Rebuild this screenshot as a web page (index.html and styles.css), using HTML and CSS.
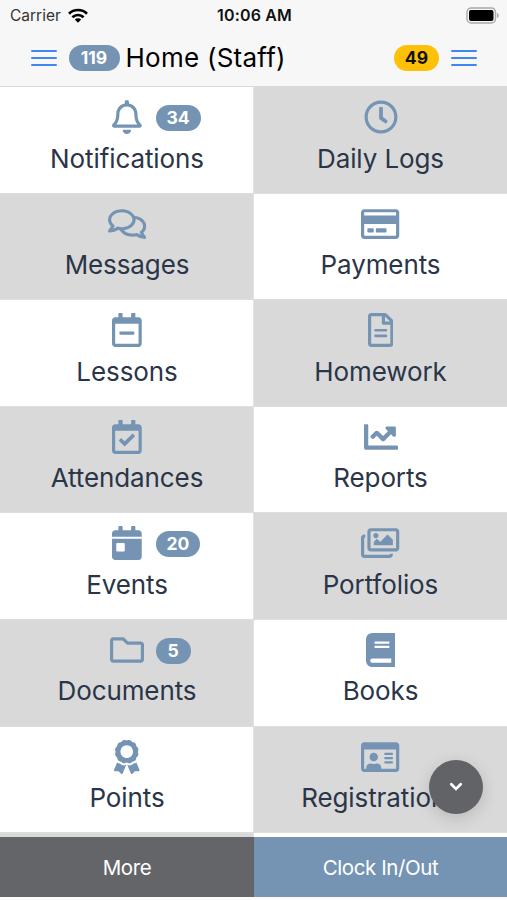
FILE: index.html
```html
<!DOCTYPE html>
<html lang="en">
<head>
    <meta charset="UTF-8">
    <meta name="viewport" content="width=device-width, initial-scale=1.0">
    <title>Home (Staff)</title>
    <link rel="stylesheet" href="styles.css">
</head>
<body>
    <header>
        <div class="status-bar">
            <div class="carrier">
                <span>Carrier</span>
                <svg class="wifi" viewBox="0 0 20 15" width="20" height="15">
                    <g fill="none" stroke="#000" stroke-width="2.7">
                        <path d="M1 5.7a12.8 12.8 0 0 1 18 0"/>
                        <path d="M4.4 9.3a8 8 0 0 1 11.2 0"/>
                    </g>
                    <path d="M10 14.8l-3.2-3.2a4.6 4.6 0 0 1 6.4 0z"/>
                </svg>
            </div>
            <div class="clock">10:06 AM</div>
            <div class="battery-wrap">
                <svg viewBox="0 0 33 17" width="33" height="17">
                    <rect x="1" y="1" width="28.5" height="15" rx="4.2" fill="#f7f7f7" stroke="#a9a9a9" stroke-width="1.4"/>
                    <rect x="3" y="3" width="24.5" height="11" rx="2"/>
                    <path d="M31 6v5c2.3-.8 2.3-4.2 0-5z" fill="#a9a9a9"/>
                </svg>
            </div>
        </div>
        <nav>
            <button class="menu" aria-label="Menu"><i></i><i></i><i></i></button>
            <span class="badge">119</span>
            <h1>Home (Staff)</h1>
            <span class="badge yellow">49</span>
            <button class="menu" aria-label="Options"><i></i><i></i><i></i></button>
        </nav>
    </header>

    <main class="grid">
        <a class="tile">
            <div class="icon">
                <svg viewBox="0 0 448 512"><path d="M439.39 362.29c-19.32-20.76-55.47-51.99-55.47-154.29 0-77.7-54.48-139.9-127.94-155.16V32c0-17.67-14.32-32-31.98-32s-31.98 14.33-31.98 32v20.84C118.56 68.1 64.08 130.3 64.08 208c0 102.3-36.15 133.53-55.47 154.29-6 6.45-8.66 14.16-8.61 21.71.11 16.4 12.98 32 32.1 32h383.8c19.12 0 32-15.6 32.1-32 .05-7.55-2.61-15.27-8.61-21.71zM67.53 368c21.22-27.97 44.42-74.33 44.53-159.42 0-.2-.06-.38-.06-.58 0-61.86 50.14-112 112-112s112 50.14 112 112c0 .2-.06.38-.06.58.11 85.1 23.31 131.46 44.53 159.42H67.53zM224 512c35.32 0 63.97-28.65 63.97-64H160.03c0 35.35 28.65 64 63.97 64z"/></svg>
                <span class="badge">34</span>
            </div>
            <span class="label">Notifications</span>
        </a>
        <a class="tile gray">
            <div class="icon">
                <svg viewBox="0 0 512 512"><path d="M256 8C119 8 8 119 8 256s111 248 248 248 248-111 248-248S393 8 256 8zm0 448c-110.5 0-200-89.5-200-200S145.5 56 256 56s200 89.5 200 200-89.5 200-200 200zm61.8-104.4l-84.9-61.7c-3.1-2.3-4.9-5.9-4.9-9.7V116c0-6.6 5.4-12 12-12h32c6.6 0 12 5.4 12 12v141.7l66.8 48.6c5.4 3.9 6.5 11.4 2.6 16.8L334.6 349c-3.9 5.3-11.4 6.5-16.8 2.6z"/></svg>
            </div>
            <span class="label">Daily Logs</span>
        </a>
        <a class="tile gray">
            <div class="icon">
                <svg viewBox="0 0 576 512"><path d="M532 386.2c27.5-27.1 44-61.1 44-98.2 0-80-76.5-146.1-176.2-157.9C368.3 72.5 294.3 32 208 32 93.1 32 0 103.6 0 192c0 37 16.5 71 44 98.2-15.3 30.7-37.3 54.5-37.7 54.9-6.3 6.7-8.1 16.5-4.4 25 3.6 8.5 12 14 21.2 14 53.5 0 96.7-20.2 125.2-38.8 9.2 2.1 18.7 3.7 28.4 4.9C208.1 407.6 281.8 448 368 448c20.8 0 40.8-2.4 59.8-6.8C456.3 459.7 499.4 480 553 480c9.2 0 17.5-5.5 21.2-14 3.6-8.5 1.9-18.3-4.4-25-.4-.3-22.5-24.1-37.8-54.8zm-392.8-92.3L122.1 305c-14.1 9.1-28.5 16.3-43.1 21.4 2.7-4.7 5.4-9.7 8-14.8l15.5-31.1L77.7 256C64.2 242.6 48 220.7 48 192c0-60.7 73.3-112 160-112s160 51.3 160 112-73.3 112-160 112c-16.5 0-33-1.9-49-5.6l-19.8-4.5zM498.3 352l-24.7 24.4 15.5 31.1c2.6 5.1 5.3 10.1 8 14.8-14.6-5.1-29-12.3-43.1-21.4l-17.1-11.1-19.9 4.6c-16 3.7-32.5 5.6-49 5.6-54 0-102.2-20.1-131.3-49.7C338 339.5 416 272.9 416 192c0-3.4-.4-6.7-.7-10C479.7 196.5 528 238.8 528 288c0 28.7-16.2 50.6-29.7 64z"/></svg>
            </div>
            <span class="label">Messages</span>
        </a>
        <a class="tile">
            <div class="icon">
                <svg viewBox="0 0 576 512"><path d="M527.9 32H48.1C21.5 32 0 53.5 0 80v352c0 26.5 21.5 48 48.1 48h479.8c26.6 0 48.1-21.5 48.1-48V80c0-26.5-21.5-48-48.1-48zM54.1 80h467.8c3.3 0 6 2.7 6 6v42H48.1V86c0-3.3 2.7-6 6-6zm467.8 352H54.1c-3.3 0-6-2.7-6-6V256h479.8v170c0 3.3-2.7 6-6 6zM192 332v40c0 6.6-5.4 12-12 12h-72c-6.6 0-12-5.4-12-12v-40c0-6.6 5.4-12 12-12h72c6.6 0 12 5.4 12 12zm192 0v40c0 6.6-5.4 12-12 12H236c-6.6 0-12-5.4-12-12v-40c0-6.6 5.4-12 12-12h136c6.6 0 12 5.4 12 12z"/></svg>
            </div>
            <span class="label">Payments</span>
        </a>
        <a class="tile">
            <div class="icon">
                <svg viewBox="0 0 448 512"><path d="M124 328c-6.6 0-12-5.4-12-12v-24c0-6.6 5.4-12 12-12h200c6.6 0 12 5.4 12 12v24c0 6.6-5.4 12-12 12H124z"/><path d="M400 64h-48V12c0-6.6-5.4-12-12-12h-40c-6.6 0-12 5.4-12 12v52H160V12c0-6.6-5.4-12-12-12h-40c-6.6 0-12 5.4-12 12v52H48C21.5 64 0 85.5 0 112v352c0 26.5 21.5 48 48 48h352c26.5 0 48-21.5 48-48V112c0-26.5-21.5-48-48-48zm-6 400H54c-3.3 0-6-2.7-6-6V160h352v298c0 3.3-2.7 6-6 6z"/></svg>
            </div>
            <span class="label">Lessons</span>
        </a>
        <a class="tile gray">
            <div class="icon">
                <svg viewBox="0 0 384 512"><path d="M369.9 97.9L286 14C277 5 264.8 0 252.1 0H48C21.5 0 0 21.5 0 48v416c0 26.5 21.5 48 48 48h288c26.5 0 48-21.5 48-48V131.9c0-12.7-5.1-25-14.1-34zM332.1 128H256V51.9l76.1 76.1zM48 464V48h160v104c0 13.3 10.7 24 24 24h104v288H48z"/><rect x="96" y="240" width="192" height="40" rx="12"/><rect x="96" y="325" width="192" height="40" rx="12"/></svg>
            </div>
            <span class="label">Homework</span>
        </a>
        <a class="tile gray">
            <div class="icon">
                <svg viewBox="0 0 448 512"><path d="M400 64h-48V12c0-6.6-5.4-12-12-12h-40c-6.6 0-12 5.4-12 12v52H160V12c0-6.6-5.4-12-12-12h-40c-6.6 0-12 5.4-12 12v52H48C21.5 64 0 85.5 0 112v352c0 26.5 21.5 48 48 48h352c26.5 0 48-21.5 48-48V112c0-26.5-21.5-48-48-48zm-6 400H54c-3.3 0-6-2.7-6-6V160h352v298c0 3.3-2.7 6-6 6z"/><path d="M341.15 250.92L198.84 392.08c-4.7 4.67-12.3 4.64-16.97-.07l-75.09-75.7c-4.67-4.7-4.64-12.3.07-16.97l22.72-22.54c4.7-4.67 12.3-4.64 16.97.07l44.1 44.46 111.07-110.18c4.7-4.67 12.3-4.64 16.97.07l22.54 22.72c4.67 4.7 4.64 12.3-.07 16.98z"/></svg>
            </div>
            <span class="label">Attendances</span>
        </a>
        <a class="tile">
            <div class="icon">
                <svg viewBox="0 0 512 512"><path d="M496 384H64V80c0-8.84-7.16-16-16-16H16C7.16 64 0 71.16 0 80v336c0 17.67 14.33 32 32 32h464c8.84 0 16-7.16 16-16v-32c0-8.84-7.16-16-16-16zM464 96H345.94c-21.38 0-32.09 25.85-16.97 40.97l32.4 32.4L288 242.75l-73.37-73.37c-12.5-12.5-32.76-12.5-45.25 0l-68.69 68.69c-6.25 6.25-6.25 16.38 0 22.63l22.62 22.62c6.25 6.25 16.38 6.25 22.63 0L192 237.25l73.37 73.37c12.5 12.5 32.76 12.5 45.25 0l96-96 32.4 32.4c15.12 15.12 40.97 4.41 40.97-16.97V112c.01-8.84-7.15-16-15.99-16z"/></svg>
            </div>
            <span class="label">Reports</span>
        </a>
        <a class="tile">
            <div class="icon">
                <svg viewBox="0 0 448 512"><path d="M0 464c0 26.5 21.5 48 48 48h352c26.5 0 48-21.5 48-48V192H0v272zm64-192c0-8.8 7.2-16 16-16h96c8.8 0 16 7.2 16 16v96c0 8.8-7.2 16-16 16H80c-8.8 0-16-7.2-16-16v-96zM400 64h-48V16c0-8.8-7.2-16-16-16h-32c-8.8 0-16 7.2-16 16v48H160V16c0-8.8-7.2-16-16-16h-32c-8.8 0-16 7.2-16 16v48H48C21.5 64 0 85.5 0 112v48h448v-48c0-26.5-21.5-48-48-48z"/></svg>
                <span class="badge">20</span>
            </div>
            <span class="label">Events</span>
        </a>
        <a class="tile gray">
            <div class="icon">
                <svg viewBox="0 0 576 512"><path d="M480 416v16c0 26.51-21.49 48-48 48H48c-26.51 0-48-21.49-48-48V176c0-26.51 21.49-48 48-48h16v48H54a6 6 0 0 0-6 6v244a6 6 0 0 0 6 6h372a6 6 0 0 0 6-6v-10h48zm42-336H150a6 6 0 0 0-6 6v244a6 6 0 0 0 6 6h372a6 6 0 0 0 6-6V86a6 6 0 0 0-6-6zm6-48c26.51 0 48 21.49 48 48v256c0 26.51-21.49 48-48 48H144c-26.51 0-48-21.49-48-48V80c0-26.51 21.49-48 48-48h384zM264 144c0 22.09-17.91 40-40 40s-40-17.91-40-40 17.91-40 40-40 40 17.91 40 40zm-72 96l39.52-39.52c4.69-4.69 12.28-4.69 16.97 0L288 240l103.52-103.52c4.69-4.69 12.28-4.69 16.97 0L480 208v80H192v-48z"/></svg>
            </div>
            <span class="label">Portfolios</span>
        </a>
        <a class="tile gray">
            <div class="icon">
                <svg viewBox="0 0 512 512"><path d="M464 128H272l-54.63-54.63c-6-6-14.14-9.37-22.63-9.37H48C21.49 64 0 85.49 0 112v288c0 26.51 21.49 48 48 48h416c26.51 0 48-21.49 48-48V176c0-26.51-21.49-48-48-48zm0 272H48V112h140.12l54.63 54.63c6 6 14.14 9.37 22.63 9.37H464v224z"/></svg>
                <span class="badge">5</span>
            </div>
            <span class="label">Documents</span>
        </a>
        <a class="tile">
            <div class="icon">
                <svg viewBox="0 0 448 512"><path d="M448 360V24c0-13.3-10.7-24-24-24H96C43 0 0 43 0 96v320c0 53 43 96 96 96h328c13.3 0 24-10.7 24-24v-16c0-7.5-3.5-14.3-8.9-18.7-4.2-15.4-4.2-59.3 0-74.7 5.4-4.3 8.9-11.1 8.9-18.6zM128 134c0-3.3 2.7-6 6-6h212c3.3 0 6 2.7 6 6v20c0 3.3-2.7 6-6 6H134c-3.3 0-6-2.7-6-6v-20zm0 64c0-3.3 2.7-6 6-6h212c3.3 0 6 2.7 6 6v20c0 3.3-2.7 6-6 6H134c-3.3 0-6-2.7-6-6v-20zm253.4 250H96c-17.7 0-32-14.3-32-32 0-17.6 14.4-32 32-32h285.4c-1.9 17.1-1.9 46.9 0 64z"/></svg>
            </div>
            <span class="label">Books</span>
        </a>
        <a class="tile">
            <div class="icon">
                <svg viewBox="0 0 384 512"><path d="M97.12 362.63c-8.69-8.69-4.16-6.24-25.12-11.85-9.51-2.55-17.87-7.45-25.43-13.32L1.2 448.7c-4.39 10.77 3.81 22.47 15.43 22.03l52.69-2.01L105.56 507c8 8.44 22.04 5.81 26.43-4.96l52.05-127.62c-10.84 6.04-22.87 9.58-35.31 9.58-19.5 0-37.82-7.59-51.61-21.37zM382.8 448.7l-45.37-111.24c-7.56 5.88-15.92 10.77-25.43 13.32-21.07 5.64-16.45 3.18-25.12 11.85-13.79 13.78-32.12 21.37-51.62 21.37-12.44 0-24.47-3.55-35.31-9.58L252 502.04c4.39 10.77 18.44 13.4 26.43 4.96l36.25-38.28 52.69 2.01c11.62.44 19.82-11.27 15.43-22.03zM263 340c15.28-15.55 17.03-14.21 38.79-20.14 13.89-3.79 24.75-14.84 28.47-28.98 7.48-28.4 5.54-24.97 25.95-45.75 10.17-10.35 14.14-25.44 10.42-39.58-7.47-28.38-7.48-24.42 0-52.83 3.72-14.14-.25-29.23-10.42-39.58-20.41-20.78-18.47-17.36-25.95-45.75-3.72-14.14-14.58-25.19-28.47-28.98-27.88-7.61-24.52-5.62-44.95-26.41-10.17-10.35-25-14.4-38.89-10.61-27.87 7.6-23.98 7.61-51.9 0-13.89-3.79-28.72.25-38.89 10.61-20.41 20.78-17.05 18.8-44.94 26.41-13.89 3.79-24.75 14.84-28.47 28.98-7.47 28.39-5.54 24.97-25.95 45.75-10.17 10.35-14.15 25.44-10.42 39.58 7.47 28.36 7.48 24.4 0 52.82-3.72 14.14.25 29.23 10.42 39.59 20.41 20.78 18.47 17.35 25.95 45.75 3.72 14.14 14.58 25.19 28.47 28.98C104.6 325.96 106.27 325 121 340c13.23 13.47 33.84 15.88 49.74 5.82a39.68 39.68 0 0 1 42.53 0c15.89 10.06 36.5 7.65 49.73-5.82zM97.66 175.96c0-53.03 42.24-96.02 94.34-96.02s94.34 42.99 94.34 96.02-42.24 96.02-94.34 96.02-94.34-42.99-94.34-96.02z"/></svg>
            </div>
            <span class="label">Points</span>
        </a>
        <a class="tile gray">
            <div class="icon">
                <svg viewBox="0 0 576 512"><path d="M528 32H48C21.5 32 0 53.5 0 80v352c0 26.5 21.5 48 48 48h480c26.5 0 48-21.5 48-48V80c0-26.5-21.5-48-48-48zm0 400H303.2c.9-4.5.8 3.6.8-22.4 0-31.8-30.1-57.6-67.2-57.6-10.8 0-18.7 8-44.8 8-26.9 0-33.4-8-44.8-8-37.1 0-67.2 25.8-67.2 57.6 0 26-.2 17.9.8 22.4H48V144h480v288z"/><circle cx="192" cy="256" r="64"/><rect x="352" y="192" width="128" height="32" rx="8"/><rect x="352" y="256" width="128" height="32" rx="8"/><rect x="352" y="320" width="128" height="32" rx="8"/></svg>
            </div>
            <span class="label">Registrations</span>
        </a>
        <!-- next row, only its top edge is visible -->
        <a class="tile gray"></a>
        <a class="tile"></a>
    </main>

    <button class="scroll-down" aria-label="Scroll down">
        <svg viewBox="0 0 14 10" width="14" height="10"><path d="M2.3 2.3L7 6.9l4.7-4.6" fill="none" stroke="#fff" stroke-width="2.8" stroke-linecap="round"/></svg>
    </button>

    <footer>
        <button class="more">More</button>
        <button class="clock-in">Clock In/Out</button>
    </footer>
</body>
</html>
```
FILE: styles.css
```css
* {
    box-sizing: border-box;
}

body {
    margin: 0;
    height: 900px;
    display: flex;
    flex-direction: column;
    font-family: 'Inter', 'Liberation Sans', sans-serif;
    background: #fafafa;
    overflow: hidden;
}

button {
    border: none;
    padding: 0;
    background: none;
    font-family: inherit;
}

header {
    height: 87px;
    background: #f7f7f7;
    border-bottom: 1px solid #d9d9d9;
}

.status-bar {
    display: grid;
    grid-template-columns: 1fr auto 1fr;
    align-items: center;
    height: 30px;
    padding: 0 8px 0 10px;
    font-size: 15.5px;
}

.carrier {
    display: flex;
    align-items: center;
    gap: 7px;
    color: #333;
}

.clock {
    font-size: 16px;
    font-weight: 600;
    letter-spacing: 0.15px;
    color: #111;
}

.battery-wrap {
    display: flex;
    justify-content: flex-end;
}

nav {
    display: flex;
    align-items: center;
    height: 55px;
    padding: 0 30px 0 31px;
}

.menu {
    display: flex;
    flex-direction: column;
    gap: 5px;
    width: 26px;
}

.menu i {
    height: 2px;
    border-radius: 1px;
    background: #4285f4;
}

nav .badge {
    min-width: 51px;
    margin-left: 11.5px;
}

nav .yellow {
    min-width: 45px;
    margin: 0 12px 0 auto;
    background: #ffc107;
    color: #111;
}

h1 {
    margin: 1px 0 0 6px;
    font-size: 26px;
    font-weight: 400;
    line-height: 32px;
    letter-spacing: 0.25px;
    color: #000;
}

.badge {
    min-width: 35px;
    height: 26px;
    padding: 0 11px;
    border-radius: 13px;
    background: #7594b3;
    color: #fff;
    font-size: 17.5px;
    font-weight: 700;
    line-height: 26px;
    text-align: center;
}

.grid {
    display: grid;
    grid-template-columns: 254px 253px;
    grid-template-rows: repeat(7, 106.6px) 3.8px;
    height: 750px;
    background: #fff;
    overflow: hidden;
}

.tile {
    display: flex;
    flex-direction: column;
    align-items: center;
    padding-top: 13px;
    background: #fff;
    border-bottom: 1px solid #dedede;
}

.tile:nth-child(odd) {
    box-shadow: inset -1px 0 #e2e2e2;
}

.tile:nth-child(n+15) {
    padding: 0;
    border: none;
}

.gray {
    background: #d9d9d9;
}

.icon {
    position: relative;
    height: 34px;
}

.icon svg {
    display: block;
    height: 34px;
    fill: #7594b3;
}

/* count sits to the right of the centered icon */
.icon .badge {
    position: absolute;
    top: 5px;
    left: calc(50% + 28.5px);
}

.label {
    margin-top: 8.5px;
    font-size: 26px;
    line-height: 32px;
    letter-spacing: -0.1px;
    color: #2b3548;
}

.scroll-down {
    position: absolute;
    left: 428.5px;
    top: 759.5px;
    width: 54px;
    height: 54px;
    border-radius: 50%;
    background: #626366;
    box-shadow: 0 4px 16px rgba(0, 0, 0, 0.15);
}

footer {
    display: grid;
    grid-template-columns: 254px 253px;
    height: 60px;
}

footer button {
    color: #fff;
    font-size: 20.5px;
    letter-spacing: -0.4px;
}

.more {
    background: #646568;
}

.clock-in {
    background: #7594b3;
}
```
